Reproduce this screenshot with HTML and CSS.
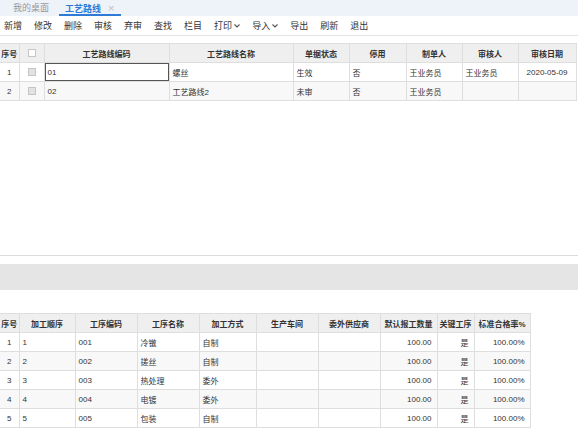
FILE: index.html
```html
<!DOCTYPE html>
<html lang="zh-CN">
<head>
    <meta charset="UTF-8">
    <title>工艺路线</title>
    <link rel="stylesheet" href="styles.css">
</head>
<body>
    <div class="tabs">
        <span class="tab">我的桌面</span>
        <span class="tab active">工艺路线<span class="close">×</span></span>
    </div>

    <div class="toolbar">
        <span class="btn">新增</span>
        <span class="btn">修改</span>
        <span class="btn">删除</span>
        <span class="btn">审核</span>
        <span class="btn">弃审</span>
        <span class="btn">查找</span>
        <span class="btn">栏目</span>
        <span class="btn">打印<svg class="caret" viewBox="0 0 6 4"><path d="M0.5 0.5 L3 3 L5.5 0.5" /></svg></span>
        <span class="btn">导入<svg class="caret" viewBox="0 0 6 4"><path d="M0.5 0.5 L3 3 L5.5 0.5" /></svg></span>
        <span class="btn">导出</span>
        <span class="btn">刷新</span>
        <span class="btn">退出</span>
    </div>

    <div class="master">
        <table class="grid master-grid">
            <colgroup>
                <col class="c19"><col class="c25"><col class="c125"><col class="c124">
                <col class="c56"><col class="c57"><col class="c56"><col class="c56"><col class="c58">
            </colgroup>
            <thead>
                <tr>
                    <th>序号</th>
                    <th><span class="check head-check"></span></th>
                    <th>工艺路线编码</th>
                    <th>工艺路线名称</th>
                    <th>单据状态</th>
                    <th>停用</th>
                    <th>制单人</th>
                    <th>审核人</th>
                    <th>审核日期</th>
                </tr>
            </thead>
            <tbody>
                <tr>
                    <td class="num">1</td>
                    <td class="mid"><span class="check"></span></td>
                    <td class="editing">01</td>
                    <td>螺丝</td>
                    <td>生效</td>
                    <td>否</td>
                    <td>王业务员</td>
                    <td>王业务员</td>
                    <td class="mid">2020-05-09</td>
                </tr>
                <tr>
                    <td class="num">2</td>
                    <td class="mid"><span class="check"></span></td>
                    <td>02</td>
                    <td>工艺路线2</td>
                    <td>未审</td>
                    <td>否</td>
                    <td>王业务员</td>
                    <td></td>
                    <td></td>
                </tr>
            </tbody>
        </table>
    </div>

    <div class="splitter"></div>

    <div class="detail">
        <table class="grid detail-grid">
            <colgroup>
                <col class="c19"><col class="c56"><col class="c62"><col class="c62"><col class="c57">
                <col class="c62"><col class="c62"><col class="c57"><col class="c37"><col class="c56">
            </colgroup>
            <thead>
                <tr>
                    <th>序号</th>
                    <th>加工顺序</th>
                    <th>工序编码</th>
                    <th>工序名称</th>
                    <th>加工方式</th>
                    <th>生产车间</th>
                    <th>委外供应商</th>
                    <th>默认报工数量</th>
                    <th>关键工序</th>
                    <th>标准合格率%</th>
                </tr>
            </thead>
            <tbody>
                <tr><td class="num">1</td><td>1</td><td>001</td><td>冷镦</td><td>自制</td><td></td><td></td><td class="right">100.00</td><td class="right">是</td><td class="right">100.00%</td></tr>
                <tr><td class="num">2</td><td>2</td><td>002</td><td>搓丝</td><td>自制</td><td></td><td></td><td class="right">100.00</td><td class="right">是</td><td class="right">100.00%</td></tr>
                <tr><td class="num">3</td><td>3</td><td>003</td><td>热处理</td><td>委外</td><td></td><td></td><td class="right">100.00</td><td class="right">是</td><td class="right">100.00%</td></tr>
                <tr><td class="num">4</td><td>4</td><td>004</td><td>电镀</td><td>委外</td><td></td><td></td><td class="right">100.00</td><td class="right">是</td><td class="right">100.00%</td></tr>
                <tr><td class="num">5</td><td>5</td><td>005</td><td>包装</td><td>自制</td><td></td><td></td><td class="right">100.00</td><td class="right">是</td><td class="right">100.00%</td></tr>
            </tbody>
        </table>
    </div>
</body>
</html>
```

FILE: styles.css
```css
body {
    margin: 0;
    font-family: "Liberation Sans", "Noto Sans CJK SC", sans-serif;
    color: #333;
    background: #fff;
    overflow: hidden;
}

.tabs {
    height: 16px;
    background: #eef2f9;
    display: flex;
    align-items: center;
    padding-left: 13px;
    gap: 10px;
    font-size: 9px;
    line-height: 16px;
}

.tab {
    color: #999;
}

.tab.active {
    color: #2d7bd6;
    font-weight: bold;
    position: relative;
    padding: 0 7px 0 6px;
}

.tab.active::after {
    content: "";
    position: absolute;
    left: 0;
    right: 0;
    bottom: 1px;
    height: 2px;
    background: #2d7bd6;
}

.close {
    color: #c0c0c0;
    font-weight: normal;
    font-size: 11px;
    margin-left: 7px;
}

.toolbar {
    height: 19px;
    border-bottom: 1px solid #e3e3e3;
    display: flex;
    align-items: center;
    padding-left: 4px;
    gap: 12px;
    font-size: 9px;
}

.btn {
    display: flex;
    align-items: center;
    color: #333;
}

.caret {
    width: 6px;
    height: 4px;
    margin-left: 2px;
    fill: none;
    stroke: #555;
    stroke-width: 1.1;
}

.master {
    height: 212px;
    padding-top: 7px;
    border-bottom: 1px solid #dcdcdc;
}

.splitter {
    height: 26px;
    margin-top: 8px;
    background: #e5e5e5;
}

.detail {
    padding-top: 23px;
}

.grid {
    border-collapse: collapse;
    table-layout: fixed;
    font-size: 8px;
}

.master-grid {
    width: 576px;
}

.detail-grid {
    width: 530px;
}

.grid th,
.grid td {
    height: 18px;
    padding: 0 3px;
    border: 1px solid #dedede;
    white-space: nowrap;
    overflow: hidden;
    text-align: left;
}

.grid th {
    background: #efefef;
    font-weight: bold;
    text-align: center;
    color: #333;
    padding: 0;
}

.grid tbody tr:nth-child(even) td {
    background: #f8f8f8;
}

.grid th:first-child,
.grid td:first-child {
    border-left: none;
}

.grid .num,
.grid .mid {
    text-align: center;
    padding: 0;
}

.grid .right {
    text-align: right;
    padding-right: 5px;
}

.grid td.editing {
    box-shadow: inset 0 0 0 1px #555;
    background: #fff;
}

.check {
    display: inline-block;
    width: 6px;
    height: 6px;
    border: 1px solid #c4c4c4;
    background: #e2e2e2;
    vertical-align: middle;
}

.head-check {
    background: #fff;
}

.c19 { width: 19px; }
.c25 { width: 25px; }
.c37 { width: 37px; }
.c56 { width: 56px; }
.c57 { width: 57px; }
.c58 { width: 58px; }
.c62 { width: 62px; }
.c124 { width: 124px; }
.c125 { width: 125px; }
```
